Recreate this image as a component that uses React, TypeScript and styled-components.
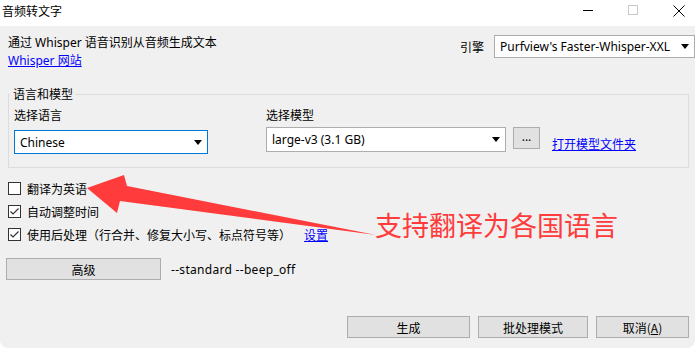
import React from "react";
import styled, { createGlobalStyle } from "styled-components";

const Global = createGlobalStyle`
  html, body { margin: 0; padding: 0; background: #ffffff; }
  body { font-family: "Noto Sans", "Noto Sans CJK SC", sans-serif; font-size: 12px; color: #000; }
  * { box-sizing: border-box; }
`;

const Window = styled.div`
  position: relative;
  width: 695px;
  height: 348px;
  display: flex;
  flex-direction: column;
  background: #f0f0f0;
  border-bottom-left-radius: 8px;
  border-bottom-right-radius: 8px;
  overflow: hidden;
`;

const TitleBar = styled.div`
  height: 26px;
  background: #ffffff;
  display: flex;
  align-items: center;
  justify-content: space-between;
`;

const Title = styled.div`
  padding-left: 2px;
  font-family: "Noto Sans CJK SC", sans-serif;
  font-size: 12px;
  line-height: 16px;
  margin-top: -4px;
`;

const Controls = styled.div`
  display: flex;
  margin-right: -6px;
  align-self: stretch;
`;

const Ctrl = styled.div`
  width: 45px;
  display: flex;
  align-items: center;
  justify-content: center;
  margin-top: -5px;
`;

const Client = styled.div`
  flex: 1;
  display: flex;
  flex-direction: column;
  padding: 8px 0 10px 8px;
`;

const TopRow = styled.div`
  display: flex;
  justify-content: space-between;
  align-items: flex-start;
`;

const Desc = styled.div`
  line-height: 18px;
  font-family: "Noto Sans", "Noto Sans CJK SC", sans-serif;
`;

const Link = styled.a`
  color: #0000ff;
  text-decoration: underline;
  cursor: pointer;
`;

const Engine = styled.div`
  display: flex;
  align-items: center;
  gap: 10px;
  margin-top: 1px;
`;

const EngineLabel = styled.span`
  font-family: "Noto Sans CJK SC", sans-serif;
`;

const Select = styled.div<{ $w: number; $h?: number; $focus?: boolean }>`
  width: ${(p) => p.$w}px;
  height: ${(p) => p.$h ?? 23}px;
  background: #ffffff;
  border: 1px solid ${(p) => (p.$focus ? "#0078d7" : "#adadad")};
  display: flex;
  align-items: center;
  justify-content: space-between;
  padding: 0 5px 0 5px;
  white-space: nowrap;
`;

const Arrow = () => (
  <svg width="8" height="5" viewBox="0 0 8 5">
    <polygon points="0,0 8,0 4,5" fill="#000" />
  </svg>
);

const GroupBox = styled.fieldset`
  margin: 16px 6px 0 0;
  border: 1px solid #dcdcdc;
  padding: 5px 5px 13px 5px;
  display: flex;
  gap: 58px;
`;

const Legend = styled.legend`
  padding: 0 3px;
  margin-left: -4px;
  line-height: 16px;
  font-family: "Noto Sans CJK SC", sans-serif;
`;

const Column = styled.div`
  display: flex;
  flex-direction: column;
`;

const FieldLabel = styled.div`
  line-height: 16px;
  font-family: "Noto Sans CJK SC", sans-serif;
`;

const SelectRow = styled.div<{ $mt: number }>`
  display: flex;
  align-items: flex-start;
  margin-top: ${(p) => p.$mt}px;
`;

const SmallButton = styled.div`
  width: 27px;
  height: 22px;
  margin-left: 7px;
  background: #e1e1e1;
  border: 1px solid #adadad;
  display: flex;
  align-items: center;
  justify-content: center;
  line-height: 1;
  padding-bottom: 2px;
`;

const FolderLink = styled(Link)`
  margin-left: 12px;
  margin-top: 8px;
  font-family: "Noto Sans CJK SC", sans-serif;
`;

const Checks = styled.div`
  margin-top: 9px;
  display: flex;
  flex-direction: column;
`;

const CheckRow = styled.div`
  height: 23px;
  display: flex;
  align-items: center;
  font-family: "Noto Sans CJK SC", sans-serif;
`;

const Box = styled.div`
  width: 13px;
  height: 13px;
  border: 1px solid #333333;
  background: #ffffff;
  margin-right: 6px;
  display: flex;
  align-items: center;
  justify-content: center;
`;

const SettingsLink = styled(Link)`
  margin-left: 13px;
`;

const AdvRow = styled.div`
  margin-top: 12px;
  margin-left: -2px;
  display: flex;
  align-items: center;
  gap: 10px;
`;

const Button = styled.div<{ $w: number }>`
  width: ${(p) => p.$w}px;
  height: 22px;
  background: #e1e1e1;
  border: 1px solid #adadad;
  display: flex;
  align-items: center;
  justify-content: center;
  font-family: "Noto Sans CJK SC", sans-serif;
`;

const Mono = styled.span`
  font-family: "Noto Sans", sans-serif;
  letter-spacing: 0.3px;
`;

const Footer = styled.div`
  margin-top: auto;
  display: flex;
  justify-content: flex-end;
  gap: 8px;
  padding-right: 6px;
`;

const Callout = styled.div`
  position: absolute;
  left: 375px;
  top: 211px;
  font-family: "Noto Sans CJK SC", sans-serif;
  font-size: 27px;
  line-height: 27px;
  color: #ff3b3b;
  white-space: nowrap;
`;

const Overlay = styled.svg`
  position: absolute;
  left: 0;
  top: 0;
  pointer-events: none;
`;

const Check = () => (
  <svg width="11" height="11" viewBox="0 0 11 11">
    <polyline points="1.5,5.5 4,8 9.5,2.5" fill="none" stroke="#333" strokeWidth="1.2" />
  </svg>
);

export default function App() {
  return (
    <>
      <Global />
      <Window>
        <TitleBar>
          <Title>音频转文字</Title>
          <Controls>
            <Ctrl>
              <svg width="11" height="11" viewBox="0 0 11 11">
                <line x1="0" y1="5.5" x2="10" y2="5.5" stroke="#000" strokeWidth="1" />
              </svg>
            </Ctrl>
            <Ctrl>
              <svg width="11" height="11" viewBox="0 0 11 11">
                <rect x="0.5" y="0.5" width="9" height="9" fill="none" stroke="#c8c8c8" strokeWidth="1" />
              </svg>
            </Ctrl>
            <Ctrl>
              <svg width="12" height="12" viewBox="0 0 12 12">
                <path d="M0.5 0.5 L11.5 11.5 M11.5 0.5 L0.5 11.5" stroke="#000" strokeWidth="1" />
              </svg>
            </Ctrl>
          </Controls>
        </TitleBar>
        <Client>
          <TopRow>
            <Desc>
              <div>通过 Whisper 语音识别从音频生成文本</div>
              <Link>Whisper 网站</Link>
            </Desc>
            <Engine>
              <EngineLabel>引擎</EngineLabel>
              <Select $w={201} $h={23}>
                <span>Purfview's Faster-Whisper-XXL</span>
                <Arrow />
              </Select>
            </Engine>
          </TopRow>
          <GroupBox>
            <Legend>语言和模型</Legend>
            <Column>
              <FieldLabel>选择语言</FieldLabel>
              <SelectRow $mt={7}>
                <Select $w={194} $h={24} $focus>
                  <span>Chinese</span>
                  <Arrow />
                </Select>
              </SelectRow>
            </Column>
            <Column>
              <FieldLabel>选择模型</FieldLabel>
              <SelectRow $mt={4}>
                <Select $w={240} $h={25}>
                  <span>large-v3 (3.1 GB)</span>
                  <Arrow />
                </Select>
                <SmallButton>...</SmallButton>
                <FolderLink>打开模型文件夹</FolderLink>
              </SelectRow>
            </Column>
          </GroupBox>
          <Checks>
            <CheckRow>
              <Box />
              翻译为英语
            </CheckRow>
            <CheckRow>
              <Box>
                <Check />
              </Box>
              自动调整时间
            </CheckRow>
            <CheckRow>
              <Box>
                <Check />
              </Box>
              使用后处理（行合并、修复大小写、标点符号等）
              <SettingsLink>设置</SettingsLink>
            </CheckRow>
          </Checks>
          <AdvRow>
            <Button $w={155}>高级</Button>
            <Mono>--standard --beep_off</Mono>
          </AdvRow>
          <Footer>
            <Button $w={123}>生成</Button>
            <Button $w={110}>批处理模式</Button>
            <Button $w={93}>
              取消(<u>A</u>)
            </Button>
          </Footer>
        </Client>
        <Overlay width="695" height="348" viewBox="0 0 695 348">
          <polygon
            points="87,188 124,175 127,186 376,235 120,201 117,213"
            fill="#ff3b3b"
          />
        </Overlay>
        <Callout>支持翻译为各国语言</Callout>
      </Window>
    </>
  );
}
